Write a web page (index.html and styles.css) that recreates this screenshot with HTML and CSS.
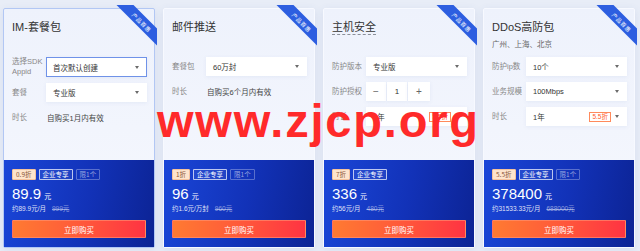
FILE: index.html
```html
<!DOCTYPE html>
<html lang="zh-CN">
<head>
<meta charset="utf-8">
<title>产品套餐</title>
<link rel="stylesheet" href="styles.css">
</head>
<body>
<div class="page">
  <div class="cards">
    <div class="card active">
      <div class="ribbon"><div class="band"><span>产品首惠</span></div></div>
      <div class="card-top">
        <div class="head"><div class="title">IM-套餐包</div></div>
        <div class="rows">
          <div class="row"><div class="label two">选择SDK Appid</div><div class="select focus"><span>首次默认创建</span><i class="caret"></i></div></div>
          <div class="row"><div class="label">套餐</div><div class="select"><span>专业版</span><i class="caret"></i></div></div>
          <div class="row"><div class="label">时长</div><div class="value">自购买1月内有效</div></div>
        </div>
      </div>
      <div class="card-bottom">
        <div class="tags"><span class="tag disc">0.9折</span><span class="tag ent">企业专享</span><span class="tag lim">限1个</span></div>
        <div class="price"><span class="num">89.9</span><span class="unit">元</span></div>
        <div class="info"><span>约89.9元/月</span><s>999元</s></div>
        <button class="buy">立即购买</button>
      </div>
    </div>

    <div class="card">
      <div class="ribbon"><div class="band"><span>产品首惠</span></div></div>
      <div class="card-top">
        <div class="head"><div class="title">邮件推送</div></div>
        <div class="rows">
          <div class="row"><div class="label">套餐包</div><div class="select"><span>60万封</span><i class="caret"></i></div></div>
          <div class="row"><div class="label">时长</div><div class="value">自购买6个月内有效</div></div>
        </div>
      </div>
      <div class="card-bottom">
        <div class="tags"><span class="tag disc">1折</span><span class="tag ent">企业专享</span><span class="tag lim">限1个</span></div>
        <div class="price"><span class="num">96</span><span class="unit">元</span></div>
        <div class="info"><span>约1.6元/万封</span><s>960元</s></div>
        <button class="buy">立即购买</button>
      </div>
    </div>

    <div class="card">
      <div class="ribbon"><div class="band"><span>产品首惠</span></div></div>
      <div class="card-top">
        <div class="head"><div class="title dashed">主机安全</div></div>
        <div class="rows">
          <div class="row"><div class="label">防护版本</div><div class="select"><span>专业版</span><i class="caret"></i></div></div>
          <div class="row"><div class="label">防护授权</div>
            <div class="stepper"><span class="step minus">−</span><span class="step count">1</span><span class="step plus">+</span></div>
          </div>
          <div class="row"><div class="label">时长</div><div class="select"><span>1年</span><em class="off">5.5折</em><i class="caret"></i></div></div>
        </div>
      </div>
      <div class="card-bottom">
        <div class="tags"><span class="tag disc">7折</span><span class="tag ent">企业专享</span></div>
        <div class="price"><span class="num">336</span><span class="unit">元</span></div>
        <div class="info"><span>约56元/月</span><s>480元</s></div>
        <button class="buy">立即购买</button>
      </div>
    </div>

    <div class="card">
      <div class="ribbon"><div class="band"><span>产品首惠</span></div></div>
      <div class="card-top">
        <div class="head"><div class="title">DDoS高防包</div><div class="sub">广州、上海、北京</div></div>
        <div class="rows">
          <div class="row"><div class="label">防护ip数</div><div class="select"><span>10个</span><i class="caret"></i></div></div>
          <div class="row"><div class="label">业务规模</div><div class="select"><span>100Mbps</span><i class="caret"></i></div></div>
          <div class="row"><div class="label">时长</div><div class="select"><span>1年</span><em class="off">5.5折</em><i class="caret"></i></div></div>
        </div>
      </div>
      <div class="card-bottom">
        <div class="tags"><span class="tag disc">5.5折</span><span class="tag ent">企业专享</span><span class="tag lim">限1个</span></div>
        <div class="price"><span class="num">378400</span><span class="unit">元</span></div>
        <div class="info"><span>约31533.33元/月</span><s>688000元</s></div>
        <button class="buy">立即购买</button>
      </div>
    </div>
  </div>
  <div class="watermark">www.zjcp.org</div>
</div>
</body>
</html>
```

FILE: styles.css
```css
* { box-sizing: border-box; }
html, body { margin: 0; padding: 0; }
body {
  width: 640px;
  height: 251px;
  overflow: hidden;
  background: #e8edf7;
  font-family: "Liberation Sans", "Noto Sans CJK SC", sans-serif;
  color: #333;
}
.page { position: relative; width: 640px; height: 251px; }
.cards {
  display: flex;
  gap: 8px;
  padding: 8px 5px 0 3px;
}
.card {
  position: relative;
  width: 152px;
  height: 240px;
  display: flex;
  flex-direction: column;
  border: 1px solid #f7f9ff;
  border-radius: 2px;
  background: linear-gradient(180deg, #eef2fc 0%, #f6f8fe 100%);
  box-shadow: 0 2px 8px rgba(60, 90, 170, 0.10);
}
.card.active { border-color: #b2c7f4; }

.ribbon {
  position: absolute;
  top: -4px;
  right: -3px;
  width: 46px;
  height: 46px;
  overflow: hidden;
  z-index: 2;
}
.band {
  position: absolute;
  left: -2px;
  top: 11px;
  width: 66px;
  height: 12px;
  background: #2d5ee0;
  transform: rotate(45deg);
  display: flex;
  align-items: center;
  justify-content: center;
}
.band span {
  color: #fff;
  font-size: 10px;
  font-family: "Noto Sans CJK SC", sans-serif;
  transform: scale(0.55);
  white-space: nowrap;
  letter-spacing: 1px;
}

.card-top {
  flex: 1;
  padding: 8px 7px 0 8px;
}
.head { height: 40px; }
.title {
  display: inline-block;
  font-size: 11px;
  line-height: 14px;
  color: #333;
}
.title.dashed {
  border-bottom: 1px dashed #8a8f99;
  padding-bottom: 0;
}
.sub {
  margin-top: 4px;
  font-size: 7.5px;
  line-height: 12px;
  color: #666;
}
.rows {
  display: flex;
  flex-direction: column;
  gap: 6px;
}
.row {
  display: grid;
  grid-template-columns: 34px 1fr;
  align-items: center;
  min-height: 19px;
}
.label {
  font-size: 7.5px;
  line-height: 10px;
  color: #888;
}
.label.two { padding-right: 2px; }
.value {
  font-size: 7.5px;
  color: #444;
  padding-left: 1px;
}
.select {
  display: flex;
  align-items: center;
  height: 19px;
  background: #fff;
  padding: 0 7px 0 6px;
  font-size: 7.5px;
  color: #333;
  border: 1px solid #fff;
  box-shadow: 0 1px 4px rgba(70, 100, 170, 0.08);
}
.select.focus { border-color: #6f92e8; height: 20px; }
.caret {
  margin-left: auto;
  width: 0;
  height: 0;
  border-left: 2.5px solid transparent;
  border-right: 2.5px solid transparent;
  border-top: 3px solid #6b6b6b;
}
.off {
  margin-left: auto;
  margin-right: 4px;
  font-style: normal;
  font-size: 6.5px;
  line-height: 8px;
  color: #ff5a2a;
  border: 1px solid #ff8a5c;
  padding: 0 2px;
}
.off + .caret { margin-left: 0; }
.stepper {
  display: flex;
  gap: 1px;
  height: 19px;
}
.step {
  width: 20px;
  display: flex;
  align-items: center;
  justify-content: center;
  background: #fff;
  box-shadow: 0 1px 4px rgba(70, 100, 170, 0.08);
  font-size: 8px;
  color: #333;
}
.step.minus, .step.plus { font-size: 10px; color: #666; }
.step.plus { width: 22px; }

.card-bottom {
  height: 87px;
  padding: 9px 8px 0 8px;
  background: linear-gradient(100deg, #1a46d8 0%, #1232b8 55%, #0c2394 100%);
  display: flex;
  flex-direction: column;
}
.tags { display: flex; gap: 3px; height: 11px; }
.tag {
  display: flex;
  align-items: center;
  padding: 0 3px;
  font-size: 6.5px;
  line-height: 9px;
  border: 1px solid;
  border-radius: 1px;
  font-family: "Noto Sans CJK SC", sans-serif;
}
.tag.disc { background: #fde4cd; border-color: #f5c29d; color: #8a5638; }
.tag.ent { border-color: rgba(255, 255, 255, 0.7); color: #fff; background: rgba(255, 255, 255, 0.06); }
.tag.lim { border-color: rgba(255, 255, 255, 0.3); color: rgba(255, 255, 255, 0.55); }
.price {
  margin-top: 5px;
  height: 18px;
  line-height: 18px;
  color: #fff;
  white-space: nowrap;
}
.num { font-size: 15px; }
.unit { font-size: 7px; margin-left: 3px; }
.info {
  margin-top: 1px;
  height: 9px;
  line-height: 9px;
  font-size: 6.5px;
  color: rgba(255, 255, 255, 0.88);
  display: flex;
  gap: 6px;
}
.info s { color: rgba(255, 255, 255, 0.5); }
.buy {
  margin-top: 7px;
  height: 18px;
  border: 1px solid rgba(255, 150, 120, 0.6);
  border-radius: 1px;
  background: linear-gradient(90deg, #ff7a32 0%, #ff5a3a 50%, #ff3442 100%);
  color: #fff;
  font-size: 7.5px;
  font-family: "Noto Sans CJK SC", sans-serif;
  padding: 0;
  width: 100%;
}

.watermark {
  position: absolute;
  left: 157px;
  top: 97px;
  font-family: "Liberation Sans", sans-serif;
  font-weight: bold;
  font-size: 47px;
  line-height: 47px;
  letter-spacing: 1.8px;
  color: #ff2a2a;
  white-space: nowrap;
  z-index: 5;
}
```
